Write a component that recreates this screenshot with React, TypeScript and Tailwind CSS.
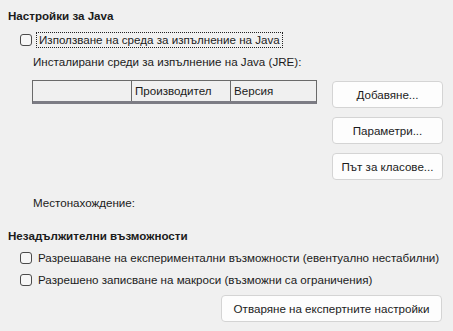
import React from "react";

function Check({ label, focus }: { label: string; focus?: boolean }) {
  return (
    <div className="flex items-center h-[16px] whitespace-nowrap">
      <div className="w-[12px] h-[12px] rounded-[3px] border border-[#4a4a4a] bg-[#f6f6f6] shrink-0" />
      <span
        className={
          focus
            ? "ml-[4px] px-[2px] border border-dotted border-[#222] leading-[14px]"
            : "ml-[6px] leading-[14px]"
        }
      >
        {label}
      </span>
    </div>
  );
}

function Btn({ label, cls }: { label: string; cls?: string }) {
  return (
    <div
      className={
        "h-[27px] flex items-center justify-center bg-[#fdfdfd] border border-[#d4d4d4] rounded-[4px] whitespace-nowrap " +
        (cls || "")
      }
    >
      {label}
    </div>
  );
}

export default function App() {
  return (
    <div
      className="w-[453px] h-[331px] bg-[#f0f0f0] text-[#1b1b1b] text-[11.6px] overflow-hidden flex flex-col"
      style={{ fontFamily: '"Liberation Sans", Arial, sans-serif' }}
    >
      <div className="pl-[8px] pt-[8px] h-[24px] leading-[16px] font-bold">Настройки за Java</div>
      <div className="pl-[20px] mt-[8px]">
        <Check label="Използване на среда за изпълнение на Java" focus />
      </div>
      <div className="pl-[33px] mt-[6px] h-[16px] leading-[16px]">
        Инсталирани среди за изпълнение на Java (JRE):
      </div>
      <div className="flex mt-[10px]">
        <div className="ml-[32px] w-[285px] h-[24px] flex border-t border-l border-r border-[#6a6a6a] border-b-[3px] border-b-[#7c7c84]">
          <div className="w-[99px] border-r border-[#6a6a6a]" />
          <div className="w-[99px] border-r border-[#6a6a6a] pl-[3px] leading-[20px]">Производител</div>
          <div className="flex-1 pl-[3px] leading-[20px]">Версия</div>
        </div>
        <div className="ml-[15px] w-[111px] flex flex-col gap-[9px] mt-[1px]">
          <Btn label="Добавяне..." />
          <Btn label="Параметри..." />
          <Btn label="Път за класове..." />
        </div>
      </div>
      <div className="pl-[33px] mt-[15px] h-[16px] leading-[16px]">Местонахождение:</div>
      <div className="pl-[8px] mt-[17px] h-[16px] leading-[16px] font-bold">Незадължителни възможности</div>
      <div className="pl-[20px] mt-[6px] flex flex-col gap-[6px]">
        <Check label="Разрешаване на експериментални възможности (евентуално нестабилни)" />
        <Check label="Разрешено записване на макроси (възможни са ограничения)" />
      </div>
      <div className="flex justify-end pr-[11px] mt-[7px]">
        <Btn label="Отваряне на експертните настройки" cls="w-[221px] h-[26px]" />
      </div>
    </div>
  );
}
